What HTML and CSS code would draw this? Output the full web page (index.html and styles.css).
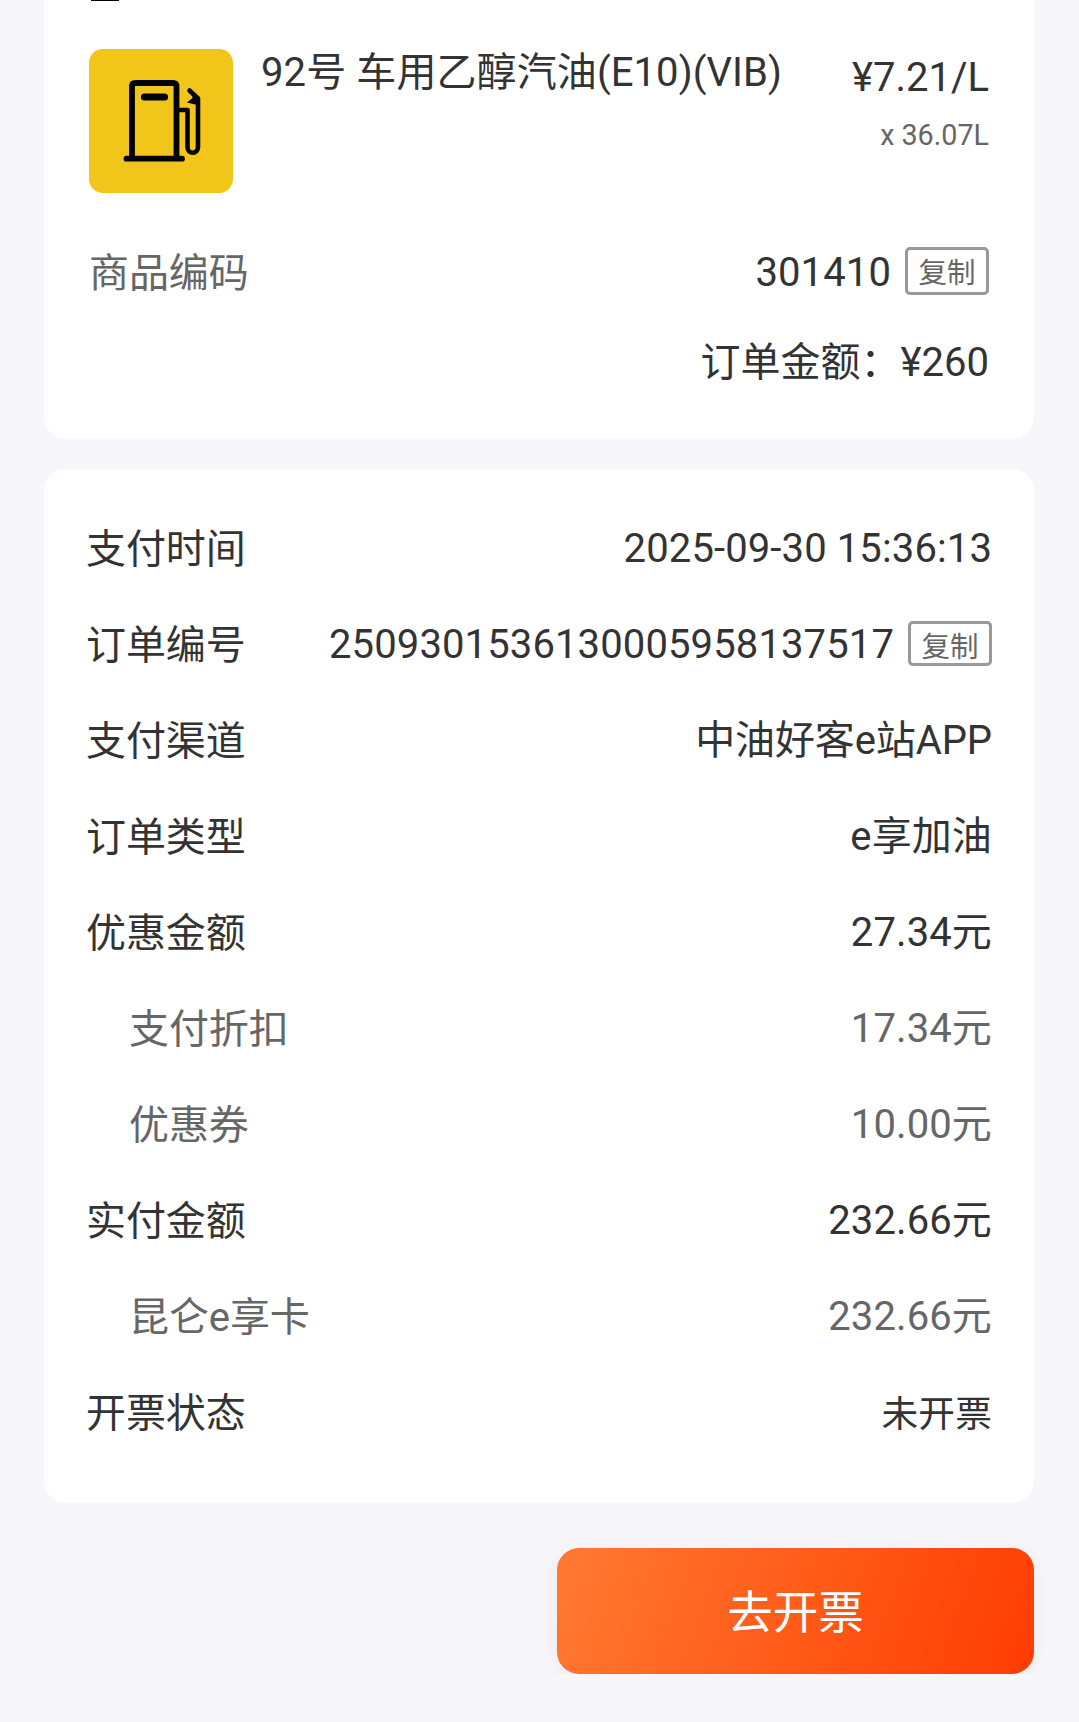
FILE: index.html
```html
<!DOCTYPE html>
<html lang="zh-CN">

<head>
    <meta charset="UTF-8">
    <meta name="viewport" content="width=device-width, initial-scale=1.0">
    <title>订单详情</title>
    <link rel="stylesheet" href="styles.css">
</head>

<body>

    <div class="card goods-card">
        <div class="station-mark"></div>
        <div class="goods">
            <div class="goods-icon">
                <svg viewBox="0 0 144 144" fill="none" stroke="#000" stroke-linecap="round" stroke-linejoin="round">
                    <path stroke-width="5.8" d="M43 108V37.500q0-3.500 3.500-3.500h37.500q3.500 0 3.500 3.500V108M37.500 109.700h55.500"/>
                    <path stroke-width="7.2" d="M55.500 48h20"/>
                    <path stroke-width="4.600" d="M88 61h10.500v37a5.250 5.800 0 0 0 10.500 0V49.500L100.500 41.500"/>
                    <path fill="#000" stroke="none" d="M103 44l8 5v6.500h-5l-8-2 5.500-4.500z"/>
                </svg>
            </div>
            <div class="goods-name">92号 车用乙醇汽油(E10)(VIB)</div>
            <div class="goods-price">
                <div class="price">¥7.21/L</div>
                <div class="count">x 36.07L</div>
            </div>
        </div>
        <div class="goods-row code-row">
            <span class="label">商品编码</span>
            <span class="value"><span class="text">301410</span><button type="button" class="copy copy-tall">复制</button></span>
        </div>
        <div class="goods-row total-row">
            <span class="text total">订单金额：¥260</span>
        </div>
    </div>

    <div class="card info-card">
        <div class="row">
            <span class="label">支付时间</span>
            <span class="value"><span class="text">2025-09-30 15:36:13</span></span>
        </div>
        <div class="row">
            <span class="label">订单编号</span>
            <span class="value"><span class="text">2509301536130005958137517</span><button type="button" class="copy">复制</button></span>
        </div>
        <div class="row">
            <span class="label">支付渠道</span>
            <span class="value"><span class="text channel">中油好客e站APP</span></span>
        </div>
        <div class="row">
            <span class="label">订单类型</span>
            <span class="value"><span class="text">e享加油</span></span>
        </div>
        <div class="row">
            <span class="label">优惠金额</span>
            <span class="value"><span class="text">27.34元</span></span>
        </div>
        <div class="row sub">
            <span class="label">支付折扣</span>
            <span class="value"><span class="text">17.34元</span></span>
        </div>
        <div class="row sub">
            <span class="label">优惠券</span>
            <span class="value"><span class="text">10.00元</span></span>
        </div>
        <div class="row">
            <span class="label">实付金额</span>
            <span class="value"><span class="text">232.66元</span></span>
        </div>
        <div class="row sub">
            <span class="label">昆仑e享卡</span>
            <span class="value"><span class="text">232.66元</span></span>
        </div>
        <div class="row">
            <span class="label">开票状态</span>
            <span class="value"><span class="text status">未开票</span></span>
        </div>
    </div>

    <div class="actions">
        <button type="button" class="invoice-btn">去开票</button>
    </div>

</body>
</html>
```
FILE: styles.css
```css
* {
    box-sizing: border-box;
}

body {
    margin: 0;
    padding: 0 45px 0 44px;
    background-color: #f6f6fb;
    color: #333;
    font-family: Roboto, "Noto Sans CJK SC", sans-serif;
    font-size: 40px;
    line-height: 48px;
}

button {
    font-family: inherit;
    padding: 0;
}

.card {
    background-color: #fff;
    border-radius: 22px;
}

.goods-card {
    height: 439px;
    padding: 0 45px;
    border-radius: 0 0 22px 22px;
}

/* bottom edge of the station icon, scrolled off the top */
.station-mark {
    width: 28px;
    height: 1px;
    margin: 0 0 48px 2px;
    background-color: #000;
}

.goods {
    display: flex;
    height: 144px;
}

.goods-icon {
    width: 144px;
    height: 144px;
    border-radius: 14px;
    background-color: #f2c51a;
}

.goods-icon svg {
    display: block;
}

.goods-name {
    flex: 1;
    margin-left: 28px;
    letter-spacing: 0.1px;
    white-space: nowrap;
}

.goods-price {
    text-align: right;
}

.price {
    margin-top: 5px;
}

.count {
    margin-top: 10px;
    font-size: 28.7px;
    line-height: 46px;
    color: #666;
}

.goods-row {
    display: flex;
    align-items: center;
    justify-content: space-between;
    height: 48px;
}

.code-row {
    margin-top: 54px;
    color: #666;
}

.code-row .text {
    color: #333;
}

.total-row {
    justify-content: flex-end;
    margin-top: 42px;
}

.label {
    padding-top: 6px;
    letter-spacing: -0.1px;
}

.value {
    display: flex;
    align-items: center;
}

.text {
    padding-top: 4px;
    letter-spacing: 0.12px;
}

.total {
    letter-spacing: 0;
}

.channel {
    padding-top: 3px;
    letter-spacing: -0.1px;
}

.copy {
    width: 84px;
    height: 45px;
    margin-top: 1px;
    margin-left: 14px;
    padding-top: 8px;
    border: 3px solid #999;
    border-radius: 5px;
    background-color: #fff;
    color: #666;
    font-size: 28.5px;
    line-height: 30px;
}

.copy-tall {
    height: 48px;
    margin-top: 0;
    padding-top: 6px;
}

.info-card {
    height: 1034px;
    margin-top: 30px;
    padding: 30px 42px 0;
}

.row {
    display: flex;
    align-items: center;
    justify-content: space-between;
    height: 96px;
}

.sub {
    padding-left: 43px;
    color: #666;
}

.status {
    padding-top: 8px;
    font-size: 36.7px;
}

.actions {
    display: flex;
    justify-content: flex-end;
    margin-top: 45px;
}

.invoice-btn {
    width: 477px;
    height: 126px;
    padding-bottom: 5px;
    border: none;
    border-radius: 22px;
    background: linear-gradient(110deg, #ff7a33, #ff3c00);
    box-shadow: 0 4px 20px rgba(0, 0, 0, 0.06);
    color: #fff;
    font-size: 45.5px;
}
```
